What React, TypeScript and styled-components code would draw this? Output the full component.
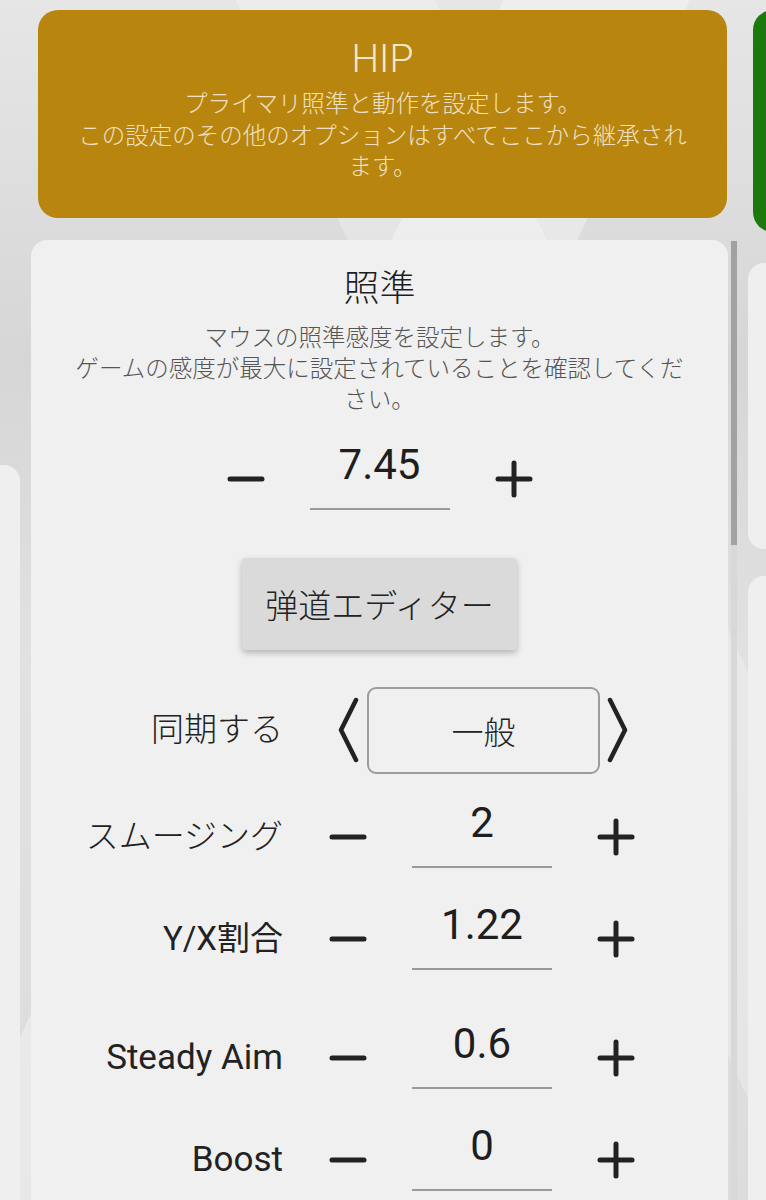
import { ReactElement } from 'react';
import styled, { createGlobalStyle } from 'styled-components';

const GlobalStyle = createGlobalStyle`
  html, body {
    margin: 0;
    padding: 0;
    width: 766px;
    height: 1200px;
    overflow: hidden;
  }
  body {
    font-family: 'Roboto', 'Noto Sans CJK JP', sans-serif;
    color: #1e1e1e;
    background:
      linear-gradient(115deg, transparent 0 38%, rgba(255, 255, 255, 0.35) 38% 52%, transparent 52%),
      linear-gradient(65deg, transparent 0 60%, rgba(255, 255, 255, 0.25) 60% 75%, transparent 75%),
      linear-gradient(180deg, #e6e6e6 0%, #d6d6d6 30%, #e1e1e1 55%, #dcdcdc 100%);
  }
`;

const Strip = styled.div`
  display: grid;
  grid-template-columns: 20px 706px 1fr;
  column-gap: 11px;
  height: 1200px;
  overflow: hidden;
`;

const SideColumn = styled.div`
  display: flex;
  flex-direction: column;
  min-width: 0;
`;

const LeftPanel = styled.div`
  margin-top: 465px;
  height: 800px;
  background: #efefef;
  border-top-right-radius: 16px;
`;

const GreenHeader = styled.div`
  margin: 10px 0 0 5px;
  height: 222px;
  width: 300px;
  background: #1c7a0c;
  border-radius: 20px;
`;

const SidePanel = styled.div<{ $gap: number; $height: number }>`
  margin-top: ${(p) => p.$gap}px;
  height: ${(p) => p.$height}px;
  width: 300px;
  background: #efefef;
  border-radius: 16px;
`;

const CenterColumn = styled.div`
  display: flex;
  flex-direction: column;
`;

const Header = styled.div`
  margin: 10px 0 0 7px;
  width: 689px;
  box-sizing: border-box;
  padding: 26px 30px 34px;
  background: #b8860f;
  border-radius: 20px;
  text-align: center;
  color: #f3e6ca;
`;

const HeaderTitle = styled.div`
  font-size: 39px;
  font-weight: 300;
  line-height: 47px;
`;

const HeaderText = styled.p`
  margin: 6px 0 0;
  font-size: 23.5px;
  font-weight: 300;
  line-height: 31.5px;
  color: #efe0c2;
`;

const CardWrap = styled.div`
  position: relative;
  margin-top: 22px;
  width: 706px;
`;

const Card = styled.div`
  width: 697px;
  min-height: 1000px;
  box-sizing: border-box;
  padding: 26px 35px 40px;
  background: #f0f0f0;
  border-radius: 16px;
  display: flex;
  flex-direction: column;
  align-items: center;
`;

const ScrollTrack = styled.div`
  position: absolute;
  left: 700px;
  top: 1px;
  width: 6px;
  height: 1000px;
  background: #d8d8d8;
`;

const ScrollThumb = styled.div`
  width: 6px;
  height: 304px;
  background: #a2a2a2;
`;

const CardTitle = styled.h2`
  margin: 0;
  font-size: 36px;
  font-weight: 300;
  line-height: 47px;
  color: #1e1e1e;
`;

const CardText = styled.p`
  margin: 10px 0 0;
  font-size: 23.5px;
  font-weight: 300;
  line-height: 31px;
  color: #555;
  text-align: center;
`;

const StepperBox = styled.div<{ $top?: number }>`
  display: flex;
  align-items: center;
  margin-top: ${(p) => p.$top ?? 0}px;
`;

const IconButton = styled.button`
  width: 38px;
  height: 38px;
  padding: 0;
  border: none;
  background: none;
  display: flex;
  align-items: center;
  justify-content: center;
  color: #222;
  cursor: pointer;
`;

const Field = styled.div`
  width: 140px;
  height: 62px;
  box-sizing: border-box;
  margin: 0 45px;
  padding-bottom: 26px;
  border-bottom: 2px solid #9a9a9a;
  font-size: 42px;
  line-height: 34px;
  text-align: center;
  color: #1e1e1e;
`;

const EditorButton = styled.button`
  margin-top: 48px;
  width: 275px;
  height: 92px;
  border: none;
  border-radius: 4px;
  background: #dadada;
  box-shadow: 0 3px 6px rgba(0, 0, 0, 0.25);
  font-family: 'Roboto', 'Noto Sans CJK JP', sans-serif;
  font-size: 33px;
  font-weight: 300;
  color: #222;
  cursor: pointer;
`;

const Row = styled.div<{ $top: number }>`
  display: grid;
  grid-template-columns: 217px 306px;
  column-gap: 46px;
  align-items: center;
  width: 569px;
  align-self: flex-start;
  margin-top: ${(p) => p.$top}px;
`;

const Label = styled.div<{ $size?: number; $weight?: number }>`
  font-size: ${(p) => p.$size ?? 33}px;
  font-weight: ${(p) => p.$weight ?? 300};
  line-height: 42px;
  text-align: right;
  white-space: nowrap;
  color: #222;
`;

const Selector = styled.div`
  display: flex;
  align-items: center;
`;

const ChevronCell = styled.button<{ $width: number }>`
  width: ${(p) => p.$width}px;
  height: 87px;
  padding: 0;
  border: none;
  background: none;
  display: flex;
  align-items: center;
  justify-content: center;
  color: #222;
`;

const SelectBox = styled.div`
  width: 233px;
  height: 87px;
  box-sizing: border-box;
  border: 2px solid #9c9c9c;
  border-radius: 9px;
  display: flex;
  align-items: center;
  justify-content: center;
  font-size: 32px;
  font-weight: 300;
  color: #222;
`;

const Minus = () => (
  <svg width="38" height="38" viewBox="0 0 38 38">
    <line x1="3" y1="19" x2="35" y2="19" stroke="currentColor" strokeWidth="5" strokeLinecap="round" />
  </svg>
);

const Plus = () => (
  <svg width="38" height="38" viewBox="0 0 38 38">
    <line x1="3" y1="19" x2="35" y2="19" stroke="currentColor" strokeWidth="5" strokeLinecap="round" />
    <line x1="19" y1="3" x2="19" y2="35" stroke="currentColor" strokeWidth="5" strokeLinecap="round" />
  </svg>
);

const Chevron = ({ dir }: { dir: 'left' | 'right' }) => (
  <svg width="22" height="66" viewBox="0 0 22 66">
    <polyline
      points={dir === 'left' ? '19,3 4,33 19,63' : '3,3 18,33 3,63'}
      fill="none"
      stroke="currentColor"
      strokeWidth="4.5"
      strokeLinecap="round"
      strokeLinejoin="round"
    />
  </svg>
);

const Stepper = ({ value, top }: { value: string; top?: number }) => (
  <StepperBox $top={top}>
    <IconButton aria-label="decrease">
      <Minus />
    </IconButton>
    <Field>{value}</Field>
    <IconButton aria-label="increase">
      <Plus />
    </IconButton>
  </StepperBox>
);

const rows = [
  { label: 'スムージング', value: '2', top: 32 },
  { label: 'Y/X割合', value: '1.22', top: 40, weight: 400 },
  { label: 'Steady Aim', value: '0.6', top: 57, size: 35, weight: 400 },
  { label: 'Boost', value: '0', top: 40, size: 35, weight: 400 },
];

const App = (): ReactElement => {
  return (
    <>
      <GlobalStyle />
      <Strip>
        <SideColumn>
          <LeftPanel />
        </SideColumn>

        <CenterColumn>
          <Header>
            <HeaderTitle>HIP</HeaderTitle>
            <HeaderText>
              プライマリ照準と動作を設定します。
              <br />
              この設定のその他のオプションはすべてここから継承されます。
            </HeaderText>
          </Header>

          <CardWrap>
            <Card>
              <CardTitle>照準</CardTitle>
              <CardText>
                マウスの照準感度を設定します。
                <br />
                ゲームの感度が最大に設定されていることを確認してください。
              </CardText>

              <Stepper value="7.45" top={32} />

              <EditorButton>弹道エディター</EditorButton>

              <Row $top={37}>
                <Label>同期する</Label>
                <Selector>
                  <ChevronCell $width={38} aria-label="previous">
                    <Chevron dir="left" />
                  </ChevronCell>
                  <SelectBox>一般</SelectBox>
                  <ChevronCell $width={35} aria-label="next">
                    <Chevron dir="right" />
                  </ChevronCell>
                </Selector>
              </Row>

              {rows.map((row) => (
                <Row key={row.label} $top={row.top}>
                  <Label $size={row.size} $weight={row.weight}>
                    {row.label}
                  </Label>
                  <Stepper value={row.value} />
                </Row>
              ))}
            </Card>
            <ScrollTrack>
              <ScrollThumb />
            </ScrollTrack>
          </CardWrap>
        </CenterColumn>

        <SideColumn>
          <GreenHeader />
          <SidePanel $gap={31} $height={286} />
          <SidePanel $gap={27} $height={700} />
        </SideColumn>
      </Strip>
    </>
  );
};

export default App;
